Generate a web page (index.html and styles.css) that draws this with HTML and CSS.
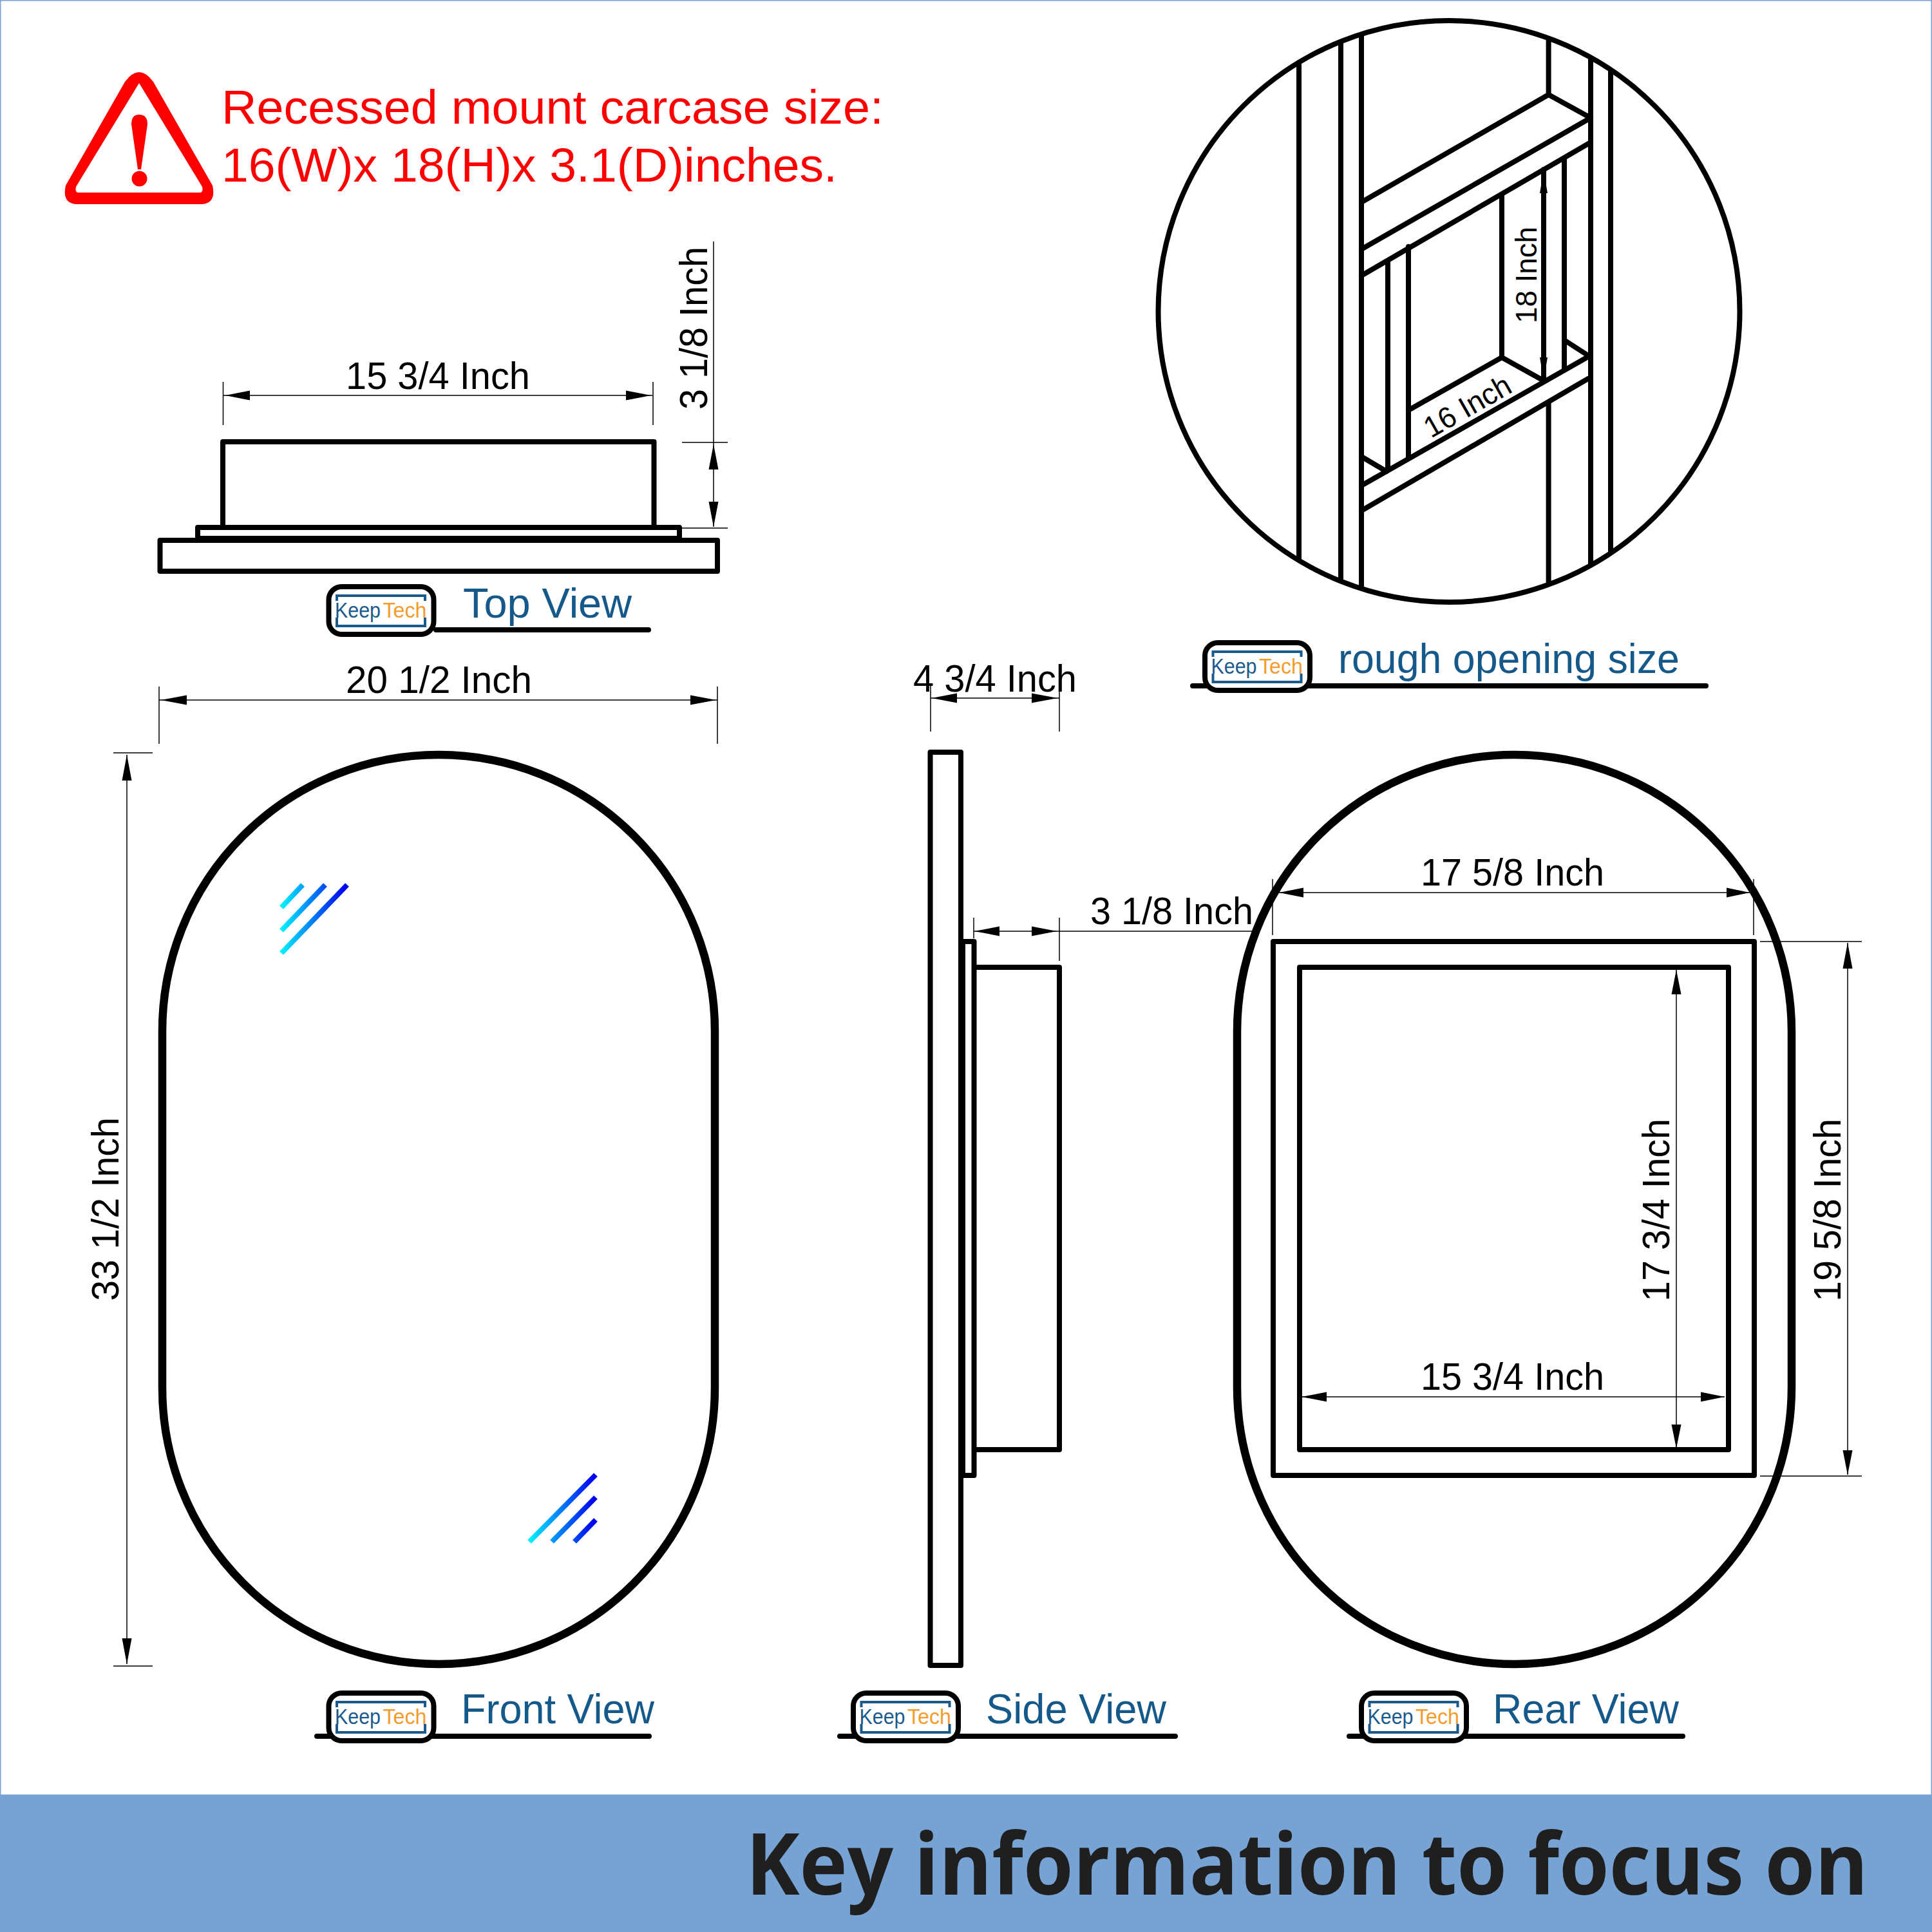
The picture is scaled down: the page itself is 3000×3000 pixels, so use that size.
FILE: index.html
```html
<!DOCTYPE html>
<html lang="en">
<head>
<meta charset="utf-8">
<title>Key information to focus on</title>
<link rel="stylesheet" href="styles.css">
</head>
<body>
<main class="sheet">
<svg class="drawing" width="3000" height="2788" viewBox="0 0 3000 2788" xmlns="http://www.w3.org/2000/svg">
  <defs>
    <linearGradient id="glintA" gradientUnits="userSpaceOnUse" x1="438" y1="0" x2="537" y2="0">
      <stop offset="0" stop-color="#00f0ff"/><stop offset="1" stop-color="#0000f0"/>
    </linearGradient>
    <linearGradient id="glintB" gradientUnits="userSpaceOnUse" x1="823" y1="0" x2="923" y2="0">
      <stop offset="0" stop-color="#00f0ff"/><stop offset="1" stop-color="#0000f0"/>
    </linearGradient>
  </defs>
  <rect class="frame" x="0" y="0" width="3000" height="2788"/>

  <!-- warning -->
  <path class="warn" fill-rule="evenodd" d="M194 127Q216 97 238 127L330 288Q336 315 314 317H118Q96 315 102 288ZM216 129L118 290Q116 299 122 299H310Q316 299 314 290Z"/>
  <path class="warn" d="M204 193Q204 178 216 178Q229 178 229 193L219 263H214Z"/>
  <ellipse class="warn" cx="216.500" cy="277.500" rx="12" ry="12"/>
  <text class="t-warn" x="344" y="192" textLength="1028" lengthAdjust="spacingAndGlyphs">Recessed mount carcase size:</text>
  <text class="t-warn" x="344" y="282" textLength="956" lengthAdjust="spacingAndGlyphs">16(W)x 18(H)x 3.1(D)inches.</text>

  <!-- top view -->
  <path class="heavy" d="M248.500 839H1114V887H248.500ZM307 819H1055V836H307ZM346 819V686H1015.500V819"/>
  <path class="thin" d="M346.500 593V660M1014 593V660M347 614H1013M1108 375V818M1059 687H1130M1058 820H1130"/>
  <path class="arrow" d="M350 614L388 606.500V621.500ZM1011 614L972 606.500V621.500ZM1108 690L1100.500 729H1115.500ZM1108 818L1100.500 779H1115.500Z"/>
  <text class="t-dim" x="537" y="604" textLength="286" lengthAdjust="spacingAndGlyphs">15 3/4 Inch</text>
  <text class="t-dim t-large" transform="translate(1098 636) rotate(-90)" textLength="253" lengthAdjust="spacingAndGlyphs">3 1/8 Inch</text>

  <!-- rough opening -->
  <circle class="heavy" cx="2250" cy="483.500" r="451.500"/>
  <path class="heavy" d="M2017 97V869M2082 67V899M2114 56V910M2404.600 62V146M2404.600 625V904M2470 92V877M2501 110V856M2114 314L2404.600 147L2470 183M2114 387L2470 183M2114 428L2470 221M2155 407V727M2187 383V712M2332 302V555M2397 263V590M2429 245V575M2114 754L2466 554M2114 793L2466 588M2187 637L2332 555L2395 590M2432 530L2466 552M2114 709L2153 732"/>
  <path class="arrow" d="M2397 264L2391 300H2403ZM2397 590L2391 555H2403Z"/>
  <text class="t-small" transform="translate(2386 502) rotate(-90)" textLength="150" lengthAdjust="spacingAndGlyphs">18 Inch</text>
  <text class="t-small" transform="translate(2222 681) rotate(-29.600)" textLength="148" lengthAdjust="spacingAndGlyphs">16 Inch</text>

  <!-- front view -->
  <rect class="heavy pill" x="252" y="1172" width="858" height="1412" rx="429" ry="429"/>
  <path class="thin" d="M247 1066V1155M1114 1066V1155M247 1087H1114M197 1172V2584M176 1169H237M176 2587H237"/>
  <path class="arrow" d="M250 1087L290 1079.500V1094.500ZM1112 1087L1072 1079.500V1094.500ZM197 1172L189.500 1212H204.500ZM197 2584L189.500 2544H204.500Z"/>
  <text class="t-dim" x="537" y="1076" textLength="289" lengthAdjust="spacingAndGlyphs">20 1/2 Inch</text>
  <text class="t-dim" transform="translate(184 2020) rotate(-90)" textLength="285" lengthAdjust="spacingAndGlyphs">33 1/2 Inch</text>
  <g class="glint-a">
    <path d="M437 1409L470 1374M437 1445L505 1374M437 1480L539 1374"/>
  </g>
  <g class="glint-b">
    <path d="M822 2394L925 2290M857 2394L925 2325M892 2394L925 2360"/>
  </g>

  <!-- side view -->
  <path class="heavy" d="M1444.500 1168H1492V2586H1444.500ZM1495 1462H1512.500V2291H1495ZM1512.500 1502H1645V2251H1512.500"/>
  <path class="thin" d="M1445 1065V1136M1645 1065V1136M1445 1084H1645M1512 1425V1457M1645 1425V1492M1512 1446H1945"/>
  <path class="arrow" d="M1447 1084L1486 1076.500V1091.500ZM1642 1084L1602 1076.500V1091.500ZM1513 1446L1552 1438.500V1453.500ZM1641 1446L1602 1438.500V1453.500Z"/>
  <text class="t-dim" x="1418" y="1074" textLength="254" lengthAdjust="spacingAndGlyphs">4 3/4 Inch</text>
  <text class="t-dim" x="1693" y="1435" textLength="253" lengthAdjust="spacingAndGlyphs">3 1/8 Inch</text>

  <!-- rear view -->
  <rect class="heavy pill" x="1921" y="1172" width="861" height="1412" rx="430" ry="430"/>
  <path class="heavy" d="M1977 1462H2724V2291H1977ZM2018 1502H2684V2251H2018Z"/>
  <path class="thin" d="M1976 1365V1452M2723 1365V1452M1986 1386H2717M2021 2169H2678M2603 1506V2249M2869 1464V2290M2733 1462H2891M2733 2292H2891"/>
  <path class="arrow" d="M1986 1386L2024 1378.500V1393.500ZM2717 1386L2681 1378.500V1393.500ZM2021 2169L2060 2161.500V2176.500ZM2678 2169L2641 2161.500V2176.500ZM2603 1506L2595.500 1544H2610.500ZM2603 2249L2595.500 2212H2610.500ZM2869 1464L2861.500 1504H2876.500ZM2869 2290L2861.500 2252H2876.500Z"/>
  <text class="t-dim" x="2206" y="1375" textLength="285" lengthAdjust="spacingAndGlyphs">17 5/8 Inch</text>
  <text class="t-dim" x="2206" y="2158" textLength="285" lengthAdjust="spacingAndGlyphs">15 3/4 Inch</text>
  <text class="t-dim" transform="translate(2592 2021) rotate(-90)" textLength="284" lengthAdjust="spacingAndGlyphs">17 3/4 Inch</text>
  <text class="t-dim" transform="translate(2858 2021) rotate(-90)" textLength="284" lengthAdjust="spacingAndGlyphs">19 5/8 Inch</text>

  <!-- captions -->
  <path class="rule" d="M677 978H1007M492 2696H1008M1304 2696H1825M2095 2696H2613M1852 1065H2649"/>
  <g transform="translate(506.500 907)">
    <rect class="badge" x="4" y="4" width="163" height="74" rx="20"/>
    <path class="bracket" d="M16.500 26V18H153.500V26M16.500 52V65H153.500V52"/>
    <text class="t-brand" x="13.500" y="52" textLength="71" lengthAdjust="spacingAndGlyphs">Keep</text>
    <text class="t-brand t-brand-alt" x="88" y="52" textLength="68" lengthAdjust="spacingAndGlyphs">Tech</text>
  </g>
  <text class="t-caption" x="719" y="959" textLength="262" lengthAdjust="spacingAndGlyphs">Top View</text>
  <g transform="translate(1867 994)">
    <rect class="badge" x="4" y="4" width="163" height="74" rx="20"/>
    <path class="bracket" d="M16.500 26V18H153.500V26M16.500 52V65H153.500V52"/>
    <text class="t-brand" x="13.500" y="52" textLength="71" lengthAdjust="spacingAndGlyphs">Keep</text>
    <text class="t-brand t-brand-alt" x="88" y="52" textLength="68" lengthAdjust="spacingAndGlyphs">Tech</text>
  </g>
  <text class="t-caption" x="2078" y="1045" textLength="530" lengthAdjust="spacingAndGlyphs">rough opening size</text>
  <g transform="translate(506.500 2625)">
    <rect class="badge" x="4" y="4" width="163" height="74" rx="20"/>
    <path class="bracket" d="M16.500 26V18H153.500V26M16.500 52V65H153.500V52"/>
    <text class="t-brand" x="13.500" y="52" textLength="71" lengthAdjust="spacingAndGlyphs">Keep</text>
    <text class="t-brand t-brand-alt" x="88" y="52" textLength="68" lengthAdjust="spacingAndGlyphs">Tech</text>
  </g>
  <text class="t-caption" x="716" y="2676" textLength="300" lengthAdjust="spacingAndGlyphs">Front View</text>
  <g transform="translate(1321 2625)">
    <rect class="badge" x="4" y="4" width="163" height="74" rx="20"/>
    <path class="bracket" d="M16.500 26V18H153.500V26M16.500 52V65H153.500V52"/>
    <text class="t-brand" x="13.500" y="52" textLength="71" lengthAdjust="spacingAndGlyphs">Keep</text>
    <text class="t-brand t-brand-alt" x="88" y="52" textLength="68" lengthAdjust="spacingAndGlyphs">Tech</text>
  </g>
  <text class="t-caption" x="1531" y="2676" textLength="280" lengthAdjust="spacingAndGlyphs">Side View</text>
  <g transform="translate(2110 2625)">
    <rect class="badge" x="4" y="4" width="163" height="74" rx="20"/>
    <path class="bracket" d="M16.500 26V18H153.500V26M16.500 52V65H153.500V52"/>
    <text class="t-brand" x="13.500" y="52" textLength="71" lengthAdjust="spacingAndGlyphs">Keep</text>
    <text class="t-brand t-brand-alt" x="88" y="52" textLength="68" lengthAdjust="spacingAndGlyphs">Tech</text>
  </g>
  <text class="t-caption" x="2318" y="2676" textLength="289" lengthAdjust="spacingAndGlyphs">Rear View</text>
</svg>
<footer class="band"><h1 class="band-title">Key information to focus on</h1></footer>
</main>
</body>
</html>
```
FILE: styles.css
```css
html, body {
  margin: 0;
  padding: 0;
  background: #ffffff;
}

.sheet {
  width: 3000px;
  height: 3000px;
  display: flex;
  flex-direction: column;
  background: #ffffff;
}

.drawing {
  display: block;
  flex: none;
}

.frame {
  fill: none;
  stroke: #76a3d3;
  stroke-width: 3;
}

.warn { fill: #ff0000; }

.heavy {
  fill: none;
  stroke: #000000;
  stroke-width: 8;
  stroke-linejoin: round;
  stroke-linecap: round;
}

.pill { stroke-width: 12.5; }

.thin {
  fill: none;
  stroke: #000000;
  stroke-width: 1.5;
}

.arrow { fill: #000000; }

.rule {
  fill: none;
  stroke: #000000;
  stroke-width: 8;
  stroke-linecap: round;
}

.badge {
  fill: #ffffff;
  stroke: #000000;
  stroke-width: 8;
}

.bracket {
  fill: none;
  stroke: #1a5a8c;
  stroke-width: 4;
}

.glint-a path {
  fill: none;
  stroke: url(#glintA);
  stroke-width: 8;
}

.glint-b path {
  fill: none;
  stroke: url(#glintB);
  stroke-width: 8;
}

text {
  font-family: "Liberation Sans", Arial, sans-serif;
}

.t-warn {
  font-size: 75px;
  fill: #ff0000;
}

.t-dim {
  font-size: 60px;
  fill: #000000;
}

.t-large { font-size: 61px; }

.t-small {
  font-size: 46px;
  fill: #000000;
}

.t-caption {
  font-size: 64px;
  fill: #15588a;
}

.t-brand {
  font-size: 34px;
  fill: #1a5a8c;
}

.t-brand-alt { fill: #f39c2e; }

.band {
  flex: 1;
  background: #76a3d3;
  display: flex;
  justify-content: flex-end;
  align-items: flex-start;
  padding-right: 99px;
}

.band-title {
  margin: 0;
  font-family: "Open Sans", "Noto Sans", sans-serif;
  font-size: 133px;
  font-weight: 700;
  line-height: 1;
  color: #1f1f1f;
  padding-top: 36px;
  white-space: nowrap;
  transform: scaleX(0.943);
  transform-origin: right center;
}
```
